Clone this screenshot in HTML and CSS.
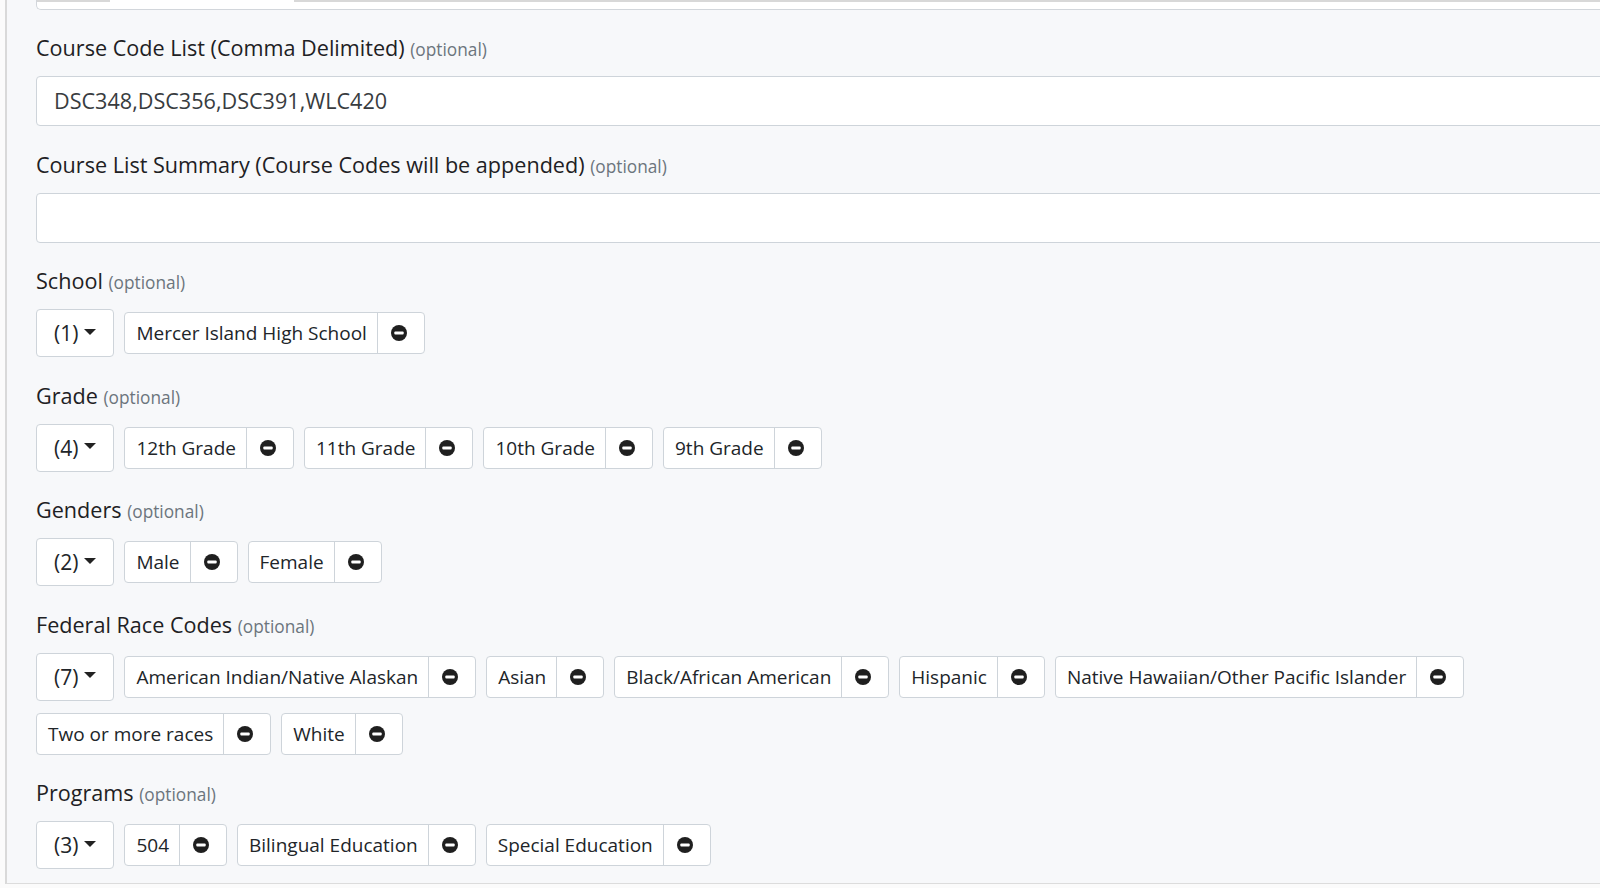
FILE: index.html
```html
<!DOCTYPE html>
<html>
<head>
<meta charset="utf-8">
<link rel="stylesheet" href="styles.css">
</head>
<body>
<div class="panel">
  <div class="top-box">
    <span class="top-line top-line-a"></span>
    <span class="top-line top-line-b"></span>
  </div>

  <div class="group group-input">
    <div class="label">Course Code List (Comma Delimited) <span class="opt">(optional)</span></div>
    <div class="input">DSC348,DSC356,DSC391,WLC420</div>
  </div>

  <div class="group group-input">
    <div class="label">Course List Summary (Course Codes will be appended) <span class="opt">(optional)</span></div>
    <div class="input"></div>
  </div>

  <div class="group">
    <div class="label">School <span class="opt">(optional)</span></div>
    <div class="chips">
      <div class="dd">(1)<span class="caret"></span></div>
      <div class="chip"><span class="chip-text">Mercer Island High School</span><span class="chip-x"><svg viewBox="0 0 16 16" width="16" height="16"><circle cx="8" cy="8" r="8" fill="#1f1f1f"/><rect x="3.3" y="6.6" width="9.4" height="2.8" rx="1" fill="#fff"/></svg></span></div>
    </div>
  </div>

  <div class="group">
    <div class="label">Grade <span class="opt">(optional)</span></div>
    <div class="chips">
      <div class="dd">(4)<span class="caret"></span></div>
      <div class="chip"><span class="chip-text">12th Grade</span><span class="chip-x"><svg viewBox="0 0 16 16" width="16" height="16"><circle cx="8" cy="8" r="8" fill="#1f1f1f"/><rect x="3.3" y="6.6" width="9.4" height="2.8" rx="1" fill="#fff"/></svg></span></div>
      <div class="chip"><span class="chip-text">11th Grade</span><span class="chip-x"><svg viewBox="0 0 16 16" width="16" height="16"><circle cx="8" cy="8" r="8" fill="#1f1f1f"/><rect x="3.3" y="6.6" width="9.4" height="2.8" rx="1" fill="#fff"/></svg></span></div>
      <div class="chip"><span class="chip-text">10th Grade</span><span class="chip-x"><svg viewBox="0 0 16 16" width="16" height="16"><circle cx="8" cy="8" r="8" fill="#1f1f1f"/><rect x="3.3" y="6.6" width="9.4" height="2.8" rx="1" fill="#fff"/></svg></span></div>
      <div class="chip"><span class="chip-text">9th Grade</span><span class="chip-x"><svg viewBox="0 0 16 16" width="16" height="16"><circle cx="8" cy="8" r="8" fill="#1f1f1f"/><rect x="3.3" y="6.6" width="9.4" height="2.8" rx="1" fill="#fff"/></svg></span></div>
    </div>
  </div>

  <div class="group">
    <div class="label">Genders <span class="opt">(optional)</span></div>
    <div class="chips">
      <div class="dd">(2)<span class="caret"></span></div>
      <div class="chip"><span class="chip-text">Male</span><span class="chip-x"><svg viewBox="0 0 16 16" width="16" height="16"><circle cx="8" cy="8" r="8" fill="#1f1f1f"/><rect x="3.3" y="6.6" width="9.4" height="2.8" rx="1" fill="#fff"/></svg></span></div>
      <div class="chip"><span class="chip-text">Female</span><span class="chip-x"><svg viewBox="0 0 16 16" width="16" height="16"><circle cx="8" cy="8" r="8" fill="#1f1f1f"/><rect x="3.3" y="6.6" width="9.4" height="2.8" rx="1" fill="#fff"/></svg></span></div>
    </div>
  </div>

  <div class="group">
    <div class="label">Federal Race Codes <span class="opt">(optional)</span></div>
    <div class="chips chips-wrap">
      <div class="dd">(7)<span class="caret"></span></div>
      <div class="chip"><span class="chip-text">American Indian/Native Alaskan</span><span class="chip-x"><svg viewBox="0 0 16 16" width="16" height="16"><circle cx="8" cy="8" r="8" fill="#1f1f1f"/><rect x="3.3" y="6.6" width="9.4" height="2.8" rx="1" fill="#fff"/></svg></span></div>
      <div class="chip"><span class="chip-text">Asian</span><span class="chip-x"><svg viewBox="0 0 16 16" width="16" height="16"><circle cx="8" cy="8" r="8" fill="#1f1f1f"/><rect x="3.3" y="6.6" width="9.4" height="2.8" rx="1" fill="#fff"/></svg></span></div>
      <div class="chip"><span class="chip-text">Black/African American</span><span class="chip-x"><svg viewBox="0 0 16 16" width="16" height="16"><circle cx="8" cy="8" r="8" fill="#1f1f1f"/><rect x="3.3" y="6.6" width="9.4" height="2.8" rx="1" fill="#fff"/></svg></span></div>
      <div class="chip"><span class="chip-text">Hispanic</span><span class="chip-x"><svg viewBox="0 0 16 16" width="16" height="16"><circle cx="8" cy="8" r="8" fill="#1f1f1f"/><rect x="3.3" y="6.6" width="9.4" height="2.8" rx="1" fill="#fff"/></svg></span></div>
      <div class="chip"><span class="chip-text">Native Hawaiian/Other Pacific Islander</span><span class="chip-x"><svg viewBox="0 0 16 16" width="16" height="16"><circle cx="8" cy="8" r="8" fill="#1f1f1f"/><rect x="3.3" y="6.6" width="9.4" height="2.8" rx="1" fill="#fff"/></svg></span></div>
      <div class="chip"><span class="chip-text">Two or more races</span><span class="chip-x"><svg viewBox="0 0 16 16" width="16" height="16"><circle cx="8" cy="8" r="8" fill="#1f1f1f"/><rect x="3.3" y="6.6" width="9.4" height="2.8" rx="1" fill="#fff"/></svg></span></div>
      <div class="chip"><span class="chip-text">White</span><span class="chip-x"><svg viewBox="0 0 16 16" width="16" height="16"><circle cx="8" cy="8" r="8" fill="#1f1f1f"/><rect x="3.3" y="6.6" width="9.4" height="2.8" rx="1" fill="#fff"/></svg></span></div>
    </div>
  </div>

  <div class="group group-last">
    <div class="label">Programs <span class="opt">(optional)</span></div>
    <div class="chips">
      <div class="dd">(3)<span class="caret"></span></div>
      <div class="chip"><span class="chip-text">504</span><span class="chip-x"><svg viewBox="0 0 16 16" width="16" height="16"><circle cx="8" cy="8" r="8" fill="#1f1f1f"/><rect x="3.3" y="6.6" width="9.4" height="2.8" rx="1" fill="#fff"/></svg></span></div>
      <div class="chip"><span class="chip-text">Bilingual Education</span><span class="chip-x"><svg viewBox="0 0 16 16" width="16" height="16"><circle cx="8" cy="8" r="8" fill="#1f1f1f"/><rect x="3.3" y="6.6" width="9.4" height="2.8" rx="1" fill="#fff"/></svg></span></div>
      <div class="chip"><span class="chip-text">Special Education</span><span class="chip-x"><svg viewBox="0 0 16 16" width="16" height="16"><circle cx="8" cy="8" r="8" fill="#1f1f1f"/><rect x="3.3" y="6.6" width="9.4" height="2.8" rx="1" fill="#fff"/></svg></span></div>
    </div>
  </div>
</div>
</body>
</html>
```

FILE: styles.css
```css
html, body {
  margin: 0;
  padding: 0;
  overflow: hidden;
  background: #fbfbfb;
}

body {
  font-family: "Open Sans", "Liberation Sans", sans-serif;
  color: #212529;
  width: 1600px;
  height: 888px;
}

.panel {
  margin-left: 5px;
  width: 1800px;
  background: #f7f8fa;
  border-left: 2px solid #d9d9d9;
  border-bottom: 1px solid #dcdcdc;
  padding: 0 0 14px 29px;
}

.top-box {
  height: 9px;
  background: #fff;
  border: 1px solid #d2d6db;
  border-top: none;
  border-right: none;
  border-radius: 0 0 0 5px;
  display: flex;
  align-items: flex-start;
  margin-bottom: 23px;
}

.top-line {
  display: block;
  height: 2px;
  background: #d8d8d8;
}

.top-line-a {
  width: 73px;
}

.top-line-b {
  flex: 1;
  margin-left: 184px;
}

.group {
  margin-bottom: 23.5px;
}

.group-last {
  margin-bottom: 0;
}

.label {
  font-size: 21.6px;
  line-height: 30px;
  height: 30px;
  margin-bottom: 13px;
  color: #1e2124;
}

.opt {
  font-size: 17.3px;
  line-height: 20px;
  color: #6c757d;
}

.input {
  height: 48px;
  border: 1px solid #ced4da;
  border-radius: 4px;
  background: #fff;
  padding-left: 17px;
  font-size: 21.6px;
  line-height: 48px;
  color: #383c40;
}

.chips {
  display: flex;
  flex-wrap: wrap;
  align-items: center;
  column-gap: 10px;
  row-gap: 12px;
}

.chips-wrap {
  max-width: 1500px;
}

.dd {
  height: 46px;
  border: 1px solid #ced4da;
  border-radius: 4px;
  background: #fff;
  padding: 0 17px;
  display: flex;
  align-items: center;
  font-size: 21px;
  color: #212529;
}

.caret {
  width: 0;
  height: 0;
  border-top: 6px solid #222;
  border-left: 6px solid transparent;
  border-right: 6px solid transparent;
  margin-left: 6px;
  margin-top: -3px;
}

.chip {
  display: flex;
  height: 40px;
  border: 1px solid #ced4da;
  border-radius: 4px;
  background: #fff;
}

.chip-text {
  font-size: 19px;
  line-height: 40px;
  padding: 0 10px 0 11px;
  color: #212529;
}

.chip-x {
  width: 33px;
  padding-left: 13px;
  border-left: 1px solid #ced4da;
  display: flex;
  align-items: center;
  justify-content: flex-start;
}

.chip-x svg {
  display: block;
}
```
